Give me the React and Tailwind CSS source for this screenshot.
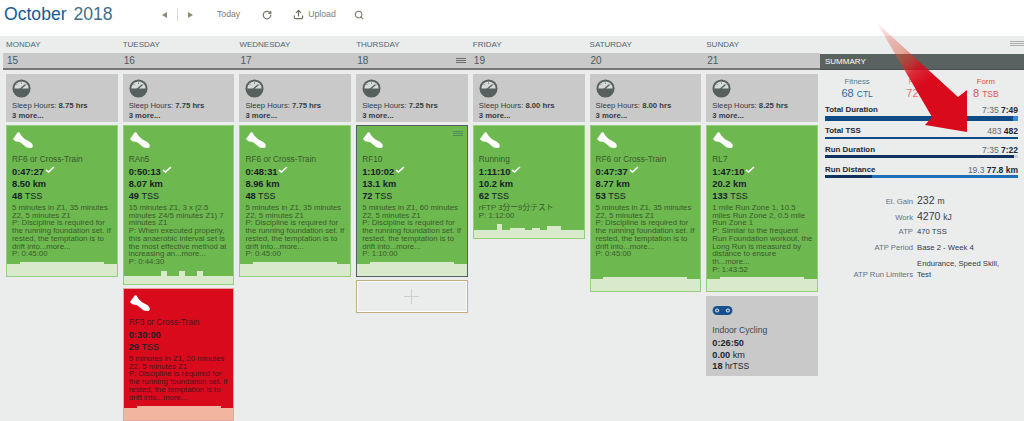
import React from "react";
import { RotateCw, Search, Upload } from "lucide-react";

const days = [
  { name: "MONDAY", date: 15, sleep: "8.75" },
  { name: "TUESDAY", date: 16, sleep: "7.75" },
  { name: "WEDNESDAY", date: 17, sleep: "7.75" },
  { name: "THURSDAY", date: 18, sleep: "7.25", menu: true },
  { name: "FRIDAY", date: 19, sleep: "8.00" },
  { name: "SATURDAY", date: 20, sleep: "8.00" },
  { name: "SUNDAY", date: 21, sleep: "8.25" },
];

const discipline = "P: Discipline is required for the running foundation set. If rested, the temptation is to drift into...more...";

const workouts = [
  [{ title: "RF6 or Cross-Train", time: "0:47:27", km: "8.50", tss: "48", desc: ["5 minutes in Z1, 35 minutes Z2, 5 minutes Z1", discipline, "P: 0:45:00"], bars: "flat", h: 152 }],
  [
    { title: "RAn5", time: "0:50:13", km: "8.07", tss: "49", desc: ["15 minutes Z1, 3 x (2.5 minutes Z4/5 minutes Z1) 7 minutes Z1", "P: When executed properly, this anaerobic interval set is the most effective method at increasing an...more...", "P: 0:44:30"], bars: "intervals", h: 160 },
    { title: "RF3 or Cross-Train", time: "0:30:00", tss: "29", desc: ["5 minutes in Z1, 20 minutes Z2, 5 minutes Z1", discipline], bars: "flat", red: true, h: 133 },
  ],
  [{ title: "RF6 or Cross-Train", time: "0:48:31", km: "8.96", tss: "48", desc: ["5 minutes in Z1, 35 minutes Z2, 5 minutes Z1", discipline, "P: 0:45:00"], bars: "flat", h: 152 }],
  [{ title: "RF10", time: "1:10:02", km: "13.1", tss: "72", desc: ["5 minutes in Z1, 60 minutes Z2, 5 minutes Z1", discipline, "P: 1:10:00"], bars: "flat", selected: true, h: 152 }],
  [{ title: "Running", time: "1:11:10", km: "10.2", tss: "62", desc: ["rFTP 3分ー9分テスト", "P: 1:12:00"], bars: "test", h: 114 }],
  [{ title: "RF6 or Cross-Train", time: "0:47:37", km: "8.77", tss: "53", desc: ["5 minutes in Z1, 35 minutes Z2, 5 minutes Z1", discipline, "P: 0:45:00"], bars: "flat", h: 167 }],
  [{ title: "RL7", time: "1:47:10", km: "20.2", tss: "133", desc: ["1 mile Run Zone 1, 10.5 miles Run Zone 2, 0.5 mile Run Zone 1", "P: Similar to the frequent Run Foundation workout, the Long Run is measured by distance to ensure th...more...", "P: 1:43:52"], bars: "flat", h: 167 }],
];

const profiles = {
  flat: [[13, 12], [85, 14], [13, 12]],
  intervals: [[37, 8], [6, 13], [12, 8], [6, 13], [12, 8], [6, 13], [31, 8]],
  test: [[23, 8], [5, 14], [8, 8], [15, 10], [7, 8], [8, 10], [7, 8], [14, 12], [23, 8]],
};

const Gauge = () => (
  <svg viewBox="0 0 20 20" className="w-[19px] h-[19px]">
    <circle cx="10" cy="10" r="9.500" fill="#56605f" />
    <path d="M2.500 10a7.500 7.500 0 0 1 15 0z" fill="#d6dad9" />
    <path d="M7.500 11.500 14 6" stroke="#56605f" strokeWidth="1.400" />
    <path d="M10 3.500v1.500M5 5.500l1 1M15 5.500l-1 1" stroke="#56605f" strokeWidth="0.800" />
  </svg>
);

const Shoe = () => (
  <svg viewBox="0 0 20 16" className="w-5 h-4 fill-white">
    <path d="M0 7 4.500.8C5.500 0 6.500.3 7 1.200 8 3.600 10 5.600 12.500 7.400 15 9 18 9.500 19.500 12.500 20.200 14.500 19.500 16 17.500 16 14 16 12.500 15 10 12.500 8 10.500 6 9.800 3.500 9.500 2 9.200.8 8.200 0 7z" />
  </svg>
);

const Check = () => (
  <svg viewBox="0 0 10 7" className="w-2.5 h-[7px] ml-px -mt-1.5 inline-block">
    <path d="M1 4 3.500 6 9 1" fill="none" stroke="#fff" strokeWidth="1.600" />
  </svg>
);

const Chain = () => (
  <svg viewBox="0 0 22 10" className="w-[21px] h-[9px]">
    <rect x="0" y="0" width="22" height="10" rx="5" fill="#17508f" />
    <circle cx="5" cy="5" r="2.300" fill="#c9d5de" />
    <circle cx="17" cy="5" r="2.300" fill="#c9d5de" />
    <circle cx="5" cy="5" r="1" fill="#17508f" />
    <circle cx="17" cy="5" r="1" fill="#17508f" />
  </svg>
);

const MenuLines = ({ color }) => (
  <div className="flex flex-col gap-[1px] w-full">
    <div className={`h-px ${color}`} />
    <div className={`h-px ${color}`} />
    <div className={`h-px ${color}`} />
  </div>
);

const Profile = ({ kind, red }) => (
  <div className="flex items-end mt-auto">
    {profiles[kind].map(([w, h], i) => (
      <div key={i} style={{ flexGrow: w, height: h, backgroundColor: red ? "#f1b5a0" : "#d9e9cc" }} />
    ))}
  </div>
);

const WorkoutCard = ({ w, menu }) => {
  const border = w.red ? "border-[#e5a3a3] bg-[#d80a1c]" : w.selected ? "border-[#555d66] bg-[#6db94f]" : "border-[#94cd7c] bg-[#6db94f]";
  const textColor = w.red ? "text-[#4e1520]" : "text-[#3a5a2c]";
  return (
    <div className={`relative flex flex-col border ${border}`} style={{ height: w.h }}>
      <div className="pl-[5px] pr-[3px] pt-[6px]">
        <div className="ml-[1px]"><Shoe /></div>
        <div className={`text-[8.300px] leading-3 mt-[5px] ${textColor}`}>{w.title}</div>
        <div className="text-[#17202a] text-[9.300px] font-bold leading-[11px] mt-[2px]">
          {w.time}
          {!w.red && <Check />}
        </div>
        {w.km && (
          <div className="text-[#17202a] text-[9.300px] font-bold leading-3">
            {w.km} km
          </div>
        )}
        <div className="text-[#17202a] text-[9px] leading-3">
          <b className="font-bold text-[9.300px]">{w.tss}</b> TSS
        </div>
        <div className={`text-[7.800px] leading-[7.700px] mt-[2px] ${textColor}`}>
          {w.desc.map((d, i) => (
            <div key={i}>{d}</div>
          ))}
        </div>
      </div>
      {menu && (
        <div className="absolute top-[5px] right-1 w-2.5"><MenuLines color="bg-[#4f8a5a]" /></div>
      )}
      <Profile kind={w.bars} red={w.red} />
    </div>
  );
};

const SleepCard = ({ sleep }) => (
  <div className="h-[48px] bg-[#c9c9c9] px-1.5 pt-[5px] text-[7.700px] text-[#333c44] leading-[10px]">
    <Gauge />
    <div className="mt-[3px]">
      Sleep Hours: <b className="font-bold">{sleep} hrs</b>
    </div>
    <div className="font-bold">3 more...</div>
  </div>
);

const Stat = ({ label, planned, actual, className, children }) => (
  <div className={className}>
    <div className="flex justify-between items-center h-3 text-[8.500px] leading-3">
      <b className="font-bold text-[7.900px] text-[#1c2733]">{label}</b>
      <span className="text-[#5b6b73]">
        {planned} <b className="font-bold text-[#1c2733]">{actual}</b>
      </span>
    </div>
    <div className="flex">{children}</div>
  </div>
);

const Metric = ({ label, children, big }) => (
  <div className="flex items-baseline gap-1 h-[15.700px]">
    <div className="w-[93px] text-right text-[7.700px] text-[#5f7382] shrink-0">{label}</div>
    <div className={big ? "text-[10.500px] text-[#333a4a]" : "text-[7.700px] text-[#333a4a]"}>{children}</div>
  </div>
);

export default function App() {
  return (
    <div className="relative h-[421px] w-[1024px] overflow-hidden bg-[#ebecec] font-['Liberation_Sans','Noto_Sans_CJK_JP',sans-serif]">
      <header className="h-9 bg-white flex items-center pl-1 pb-[6px]">
        <div className="w-[158px] text-[17.600px] text-[#155a96] leading-none">
          October <span className="text-[#3d6f8e] ml-0.5">2018</span>
        </div>
        <div className="flex items-center text-[#7b8078] text-[8.700px]">
          <span className="w-0 h-0 border-y-[3.500px] border-y-transparent border-r-[5px] border-r-[#8c8c70]" />
          <span className="w-px h-[13px] bg-[#d8d8d8] ml-[10px]" />
          <span className="w-0 h-0 ml-[10px] border-y-[3.500px] border-y-transparent border-l-[5px] border-l-[#8c8c70]" />
          <span className="ml-[24px]">Today</span>
          <RotateCw size={10} strokeWidth={3} className="ml-[22px] text-[#77786a]" />
          <Upload size={11} strokeWidth={2.500} className="ml-[21px] text-[#6f705f]" />
          <span className="ml-[4px]">Upload</span>
          <Search size={10} strokeWidth={2.500} className="ml-[18px] text-[#77786a]" />
        </div>
      </header>

      <div className="flex">
        <main className="w-[820px] pl-[3px] shrink-0">
          <div className="grid grid-cols-7 h-[17px] items-center">
            {days.map((d) => (
              <div key={d.name} className="pl-[3px] text-[8px] text-[#4d6670]">{d.name}</div>
            ))}
          </div>
          <div className="grid grid-cols-7 h-[15px] bg-[#c9c9c9] items-center">
            {days.map((d) => (
              <div key={d.date} className="pl-1 pr-[4px] text-[10px] text-[#4a5a62] flex items-center justify-between">
                {d.date}
                {d.menu && <div className="w-2.5"><MenuLines color="bg-[#6a6f6f]" /></div>}
              </div>
            ))}
          </div>
          <div className="h-[2px] bg-[#767676]" />
          <div className="grid grid-cols-7 h-[351px]">
            {days.map((d, i) => (
              <div key={d.name} className="pl-[3px] pr-[2px] pt-[4px] flex flex-col gap-[3px]">
                <SleepCard sleep={d.sleep} />
                {workouts[i].map((w) => (
                  <WorkoutCard key={w.title + w.time} w={w} menu={d.menu} />
                ))}
                {d.menu && (
                  <div className="h-[33px] border border-[#bfae7f] shadow-[inset_0_0_0_1px_#fff] flex items-center justify-center text-[#cbd0c9]">
                    <div className="relative w-[15px] h-[15px]">
                      <div className="absolute left-[7px] top-0 w-px h-full bg-current" />
                      <div className="absolute top-[7px] left-0 h-px w-full bg-current" />
                    </div>
                  </div>
                )}
                {d.name === "SUNDAY" && (
                  <div className="h-[80px] mt-px bg-[#c9c9c9] px-1.5 pt-2.5 text-[#1c2733]">
                    <Chain />
                    <div className="text-[8.600px] leading-3 mt-[9px] text-[#3b4650]">Indoor Cycling</div>
                    <div className="text-[9.200px] font-bold leading-[11.500px] mt-[2px]">0:26:50</div>
                    <div className="text-[9.200px] leading-[11.500px]"><b>0.00</b> km</div>
                    <div className="text-[8.600px] leading-[11.500px]"><b className="text-[9.200px]">18</b> hrTSS</div>
                  </div>
                )}
              </div>
            ))}
          </div>
        </main>

        <aside className="flex-1">
          <div className="relative h-[18px]">
            <div className="absolute right-0 top-[5px] w-3.5"><MenuLines color="bg-[#a9adad]" /></div>
          </div>
          <div className="h-[16px] bg-[#5a6261] px-[5px] text-[8px] leading-[15px] text-white border-b border-[#48504f]">SUMMARY</div>
          <div className="pl-[5px] pr-[6px]">
            <div className="grid grid-cols-3 pt-[7px] h-[34px] text-center">
              <div>
                <div className="text-[7.800px] leading-[10px] text-[#5c7c8e]">Fitness</div>
                <div className="text-[11px] leading-3 text-[#2c6a9e]">68 <span className="text-[8.500px]">CTL</span></div>
              </div>
              <div>
                <div className="text-[7.800px] leading-[10px] text-[#e28080]">Fatigue</div>
                <div className="text-[11px] leading-3 text-[#e57373]">72 <span className="text-[8.500px]">ATL</span></div>
              </div>
              <div>
                <div className="text-[7.800px] leading-[10px] text-[#d9534f]">Form</div>
                <div className="text-[11px] leading-3 text-[#d9534f]">8 <span className="text-[8.500px]">TSB</span></div>
              </div>
            </div>
            <Stat label="Total Duration" planned="7:35" actual="7:49">
              <div className="flex-1 h-[5px] bg-[#0f4c86]" />
              <div className="w-[5px] h-[5px] bg-[#3c8ad6]" />
            </Stat>
            <Stat label="Total TSS" planned="483" actual="482" className="mt-[4px]">
              <div className="flex-1 bg-[#0f4c86] h-[2px]" />
            </Stat>
            <Stat label="Run Duration" planned="7:35" actual="7:22" className="mt-[5px]">
              <div className="flex-1 bg-[#10325f] h-[3px] -mt-px" />
              <div className="w-1 bg-[#cfd2d2] h-[3px] -mt-px" />
            </Stat>
            <Stat label="Run Distance" planned="19.3" actual="77.8 km" className="mt-[6px]">
              <div className="w-[47px] bg-[#10325f] h-[3px] -mt-px" />
              <div className="flex-1 bg-[#1e6fba] h-[3px] -mt-px" />
            </Stat>
            <div className="mt-[15px] -ml-[5px]">
              <Metric label="El. Gain" big>232 <span className="text-[8.500px]">m</span></Metric>
              <Metric label="Work" big>4270 <span className="text-[8.500px]">kJ</span></Metric>
              <div className="mt-[2px]">
                <Metric label="ATP">470 TSS</Metric>
              </div>
              <Metric label="ATP Period">Base 2 - Week 4</Metric>
              <div className="pl-[97px] text-[7.700px] text-[#333a4a] leading-[11px]">Endurance, Speed Skill,</div>
              <Metric label="ATP Run Limiters">Test</Metric>
            </div>
          </div>
        </aside>
      </div>

      <svg className="absolute left-0 top-0 pointer-events-none" width="1024" height="421" viewBox="0 0 1024 421">
        <defs>
          <linearGradient id="tail" gradientUnits="userSpaceOnUse" x1="877" y1="23" x2="945" y2="110">
            <stop offset="0" stopColor="#d80a1c" stopOpacity="0.05" />
            <stop offset="0.35" stopColor="#e0532f" stopOpacity="0.45" />
            <stop offset="0.55" stopColor="#d80a1c" stopOpacity="0.85" />
            <stop offset="0.7" stopColor="#d80a1c" stopOpacity="1" />
          </linearGradient>
        </defs>
        <polygon points="877,23 958,97 967,90 967,132 925,125 932,117" fill="url(#tail)" />
      </svg>
    </div>
  );
}
